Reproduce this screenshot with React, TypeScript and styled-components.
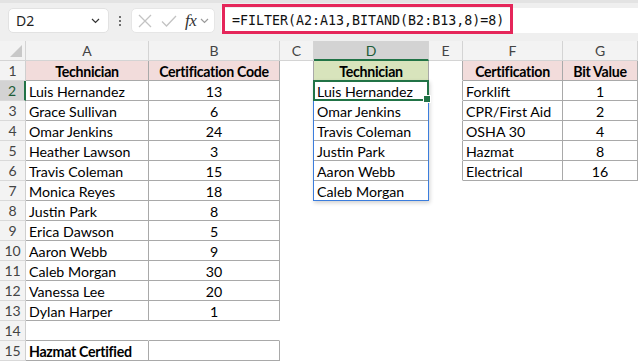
import React from 'react'
import styled, { createGlobalStyle } from 'styled-components'

const GlobalStyle = createGlobalStyle`
  html, body {
    margin: 0;
    padding: 0;
    background: #ffffff;
  }
  body {
    width: 638px;
    height: 362px;
    overflow: hidden;
    font-family: Lato, 'Liberation Sans', sans-serif;
  }
`

const GRID = '#a9a9a9'
const PINK = '#f2dcdb'
const GREEN = '#d8e4bc'
const EXCEL_GREEN = '#217346'

const COLS = [
  { key: 'A', width: 123 },
  { key: 'B', width: 131 },
  { key: 'C', width: 34 },
  { key: 'D', width: 115 },
  { key: 'E', width: 34 },
  { key: 'F', width: 100 },
  { key: 'G', width: 75 },
]
const ROW_HEAD_W = 26
const ROW_H = 20
const ROW_COUNT = 15

interface CellData {
  v: string
  align?: 'left' | 'center'
  bold?: boolean
  fill?: string
}

const technicians: [string, number][] = [
  ['Luis Hernandez', 13],
  ['Grace Sullivan', 6],
  ['Omar Jenkins', 24],
  ['Heather Lawson', 3],
  ['Travis Coleman', 15],
  ['Monica Reyes', 18],
  ['Justin Park', 8],
  ['Erica Dawson', 5],
  ['Aaron Webb', 9],
  ['Caleb Morgan', 30],
  ['Vanessa Lee', 20],
  ['Dylan Harper', 1],
]

const results = ['Luis Hernandez', 'Omar Jenkins', 'Travis Coleman', 'Justin Park', 'Aaron Webb', 'Caleb Morgan']

const certs: [string, number][] = [
  ['Forklift', 1],
  ['CPR/First Aid', 2],
  ['OSHA 30', 4],
  ['Hazmat', 8],
  ['Electrical', 16],
]

// cells keyed like "A1"
const cells: Record<string, CellData> = {
  A1: { v: 'Technician', bold: true, align: 'center', fill: PINK },
  B1: { v: 'Certification Code', bold: true, align: 'center', fill: PINK },
  D1: { v: 'Technician', bold: true, align: 'center', fill: GREEN },
  F1: { v: 'Certification', bold: true, align: 'center', fill: PINK },
  G1: { v: 'Bit Value', bold: true, align: 'center', fill: PINK },
  A15: { v: 'Hazmat Certified', bold: true },
}
technicians.forEach(([name, code], i) => {
  cells['A' + (i + 2)] = { v: name }
  cells['B' + (i + 2)] = { v: String(code), align: 'center' }
})
results.forEach((name, i) => {
  cells['D' + (i + 2)] = { v: name }
})
certs.forEach(([name, bit], i) => {
  cells['F' + (i + 2)] = { v: name }
  cells['G' + (i + 2)] = { v: String(bit), align: 'center' }
})

// bordered ranges: [col from, col to, row from, row to]
const ranges: [number, number, number, number][] = [
  [0, 1, 1, 13],
  [0, 1, 15, 16],
  [3, 3, 1, 7],
  [5, 6, 1, 6],
]
const inRange = (c: number, r: number) =>
  ranges.some(([c0, c1, r0, r1]) => c >= c0 && c <= c1 && r >= r0 && r <= r1)

const colLeft = (c: number) => ROW_HEAD_W + COLS.slice(0, c).reduce((s, col) => s + col.width, 0)

const selected = { col: 3, row: 2 }

const App: React.FC = () => {
  const rows = Array.from({ length: ROW_COUNT }, (_, i) => i + 1)
  const spillLeft = colLeft(3) - 1
  return (
    <>
      <GlobalStyle />
      <Page>
        <FormulaBar>
          <NameBox>
            <span>D2</span>
            <Chevron dark />
          </NameBox>
          <Dots>
            <i />
            <i />
            <i />
          </Dots>
          <FnBox>
            <svg width="14" height="14" viewBox="0 0 14 14">
              <path d="M1 1 L13 13 M13 1 L1 13" stroke="#c3c3c3" strokeWidth="1.3" fill="none" />
            </svg>
            <svg width="16" height="14" viewBox="0 0 16 14">
              <path d="M1 7.5 L5.5 12 L15 2" stroke="#c3c3c3" strokeWidth="1.3" fill="none" />
            </svg>
            <FxLabel>fx</FxLabel>
            <Chevron />
          </FnBox>
          <FormulaInput>
            <FormulaText>=FILTER(A2:A13,BITAND(B2:B13,8)=8)</FormulaText>
            <Highlight />
          </FormulaInput>
        </FormulaBar>

        <Sheet>
          <Corner>
            <svg width="12" height="12" viewBox="0 0 12 12">
              <polygon points="12,0 12,12 0,12" fill="#c8c8c8" />
            </svg>
          </Corner>
          {COLS.map((col, c) => (
            <ColHeader key={col.key} $selected={c === selected.col}>
              {col.key}
            </ColHeader>
          ))}

          {rows.map((r) => (
            <React.Fragment key={r}>
              <RowHeader $selected={r === selected.row}>{r}</RowHeader>
              {COLS.map((col, c) => {
                const data = cells[col.key + r]
                const right = inRange(c, r) || inRange(c + 1, r)
                const bottom = inRange(c, r) || inRange(c, r + 1)
                return (
                  <Cell
                    key={col.key}
                    $fill={data?.fill}
                    $align={data?.align ?? 'left'}
                    $bold={data?.bold}
                    $right={right}
                    $bottom={bottom}
                  >
                    {data?.v}
                  </Cell>
                )
              })}
            </React.Fragment>
          ))}

          <SpillRange
            style={{
              left: spillLeft,
              top: ROW_H * 2 - 1,
              width: COLS[3].width + 1,
              height: ROW_H * results.length + 1,
            }}
          />
          <Selection
            style={{
              left: spillLeft,
              top: ROW_H * 2 - 1,
              width: COLS[3].width + 1,
              height: ROW_H + 1,
            }}
          >
            <FillHandle />
          </Selection>
        </Sheet>
      </Page>
    </>
  )
}

const Chevron = ({ dark }: { dark?: boolean }) => (
  <svg width="9" height="6" viewBox="0 0 9 6">
    <path d="M1 1 L4.5 4.5 L8 1" stroke={dark ? '#333' : '#9a9a9a'} strokeWidth="1.2" fill="none" />
  </svg>
)

const Page = styled.div`
  width: 638px;
  display: flex;
  flex-direction: column;
`

const FormulaBar = styled.div`
  height: 41px;
  box-sizing: border-box;
  background: #efefef;
  border-top: 3px solid #e3e3e3;
  display: flex;
  align-items: flex-start;
  padding: 5px 0 0 8px;
`

const NameBox = styled.div`
  width: 101px;
  height: 25px;
  box-sizing: border-box;
  background: #ffffff;
  border: 1px solid #e2e2e2;
  border-radius: 5px;
  display: flex;
  align-items: center;
  justify-content: space-between;
  padding: 0 8px 0 7px;
  font-family: 'Noto Sans', 'Open Sans', sans-serif;
  font-size: 14px;
  color: #1f1f1f;
`

const Dots = styled.div`
  width: 22px;
  height: 25px;
  display: flex;
  flex-direction: column;
  align-items: center;
  justify-content: center;
  gap: 2px;

  i {
    width: 2px;
    height: 2px;
    background: #444;
    border-radius: 1px;
  }
`

const FnBox = styled.div`
  width: 84px;
  height: 25px;
  box-sizing: border-box;
  background: #ffffff;
  border: 1px solid #e6e6e6;
  border-radius: 5px;
  display: flex;
  align-items: center;
  gap: 9px;
  padding: 0 0 0 6px;
`

const FxLabel = styled.span`
  font-family: 'Liberation Serif', serif;
  font-style: italic;
  font-size: 17px;
  color: #333;
  margin: 0 -5px 0 -1px;
  letter-spacing: -0.5px;
`

const FormulaInput = styled.div`
  position: relative;
  flex: 1;
  height: 25px;
  margin-left: 6px;
  background: #ffffff;
  border-radius: 4px 0 0 4px;
  display: flex;
  align-items: center;
  padding-left: 11px;
`

const FormulaText = styled.span`
  font-family: 'DejaVu Sans Mono', 'Liberation Mono', monospace;
  font-size: 13.3px;
  color: #111;
  white-space: nowrap;
`

const Highlight = styled.div`
  position: absolute;
  left: 1px;
  top: -4px;
  width: 291px;
  height: 30px;
  box-sizing: border-box;
  border: 3px solid #e5265a;
  pointer-events: none;
`

const Sheet = styled.div`
  position: relative;
  display: grid;
  grid-template-columns: ${ROW_HEAD_W}px ${COLS.map((c) => c.width + 'px').join(' ')};
  grid-auto-rows: ${ROW_H}px;
  font-family: Lato, 'Liberation Sans', sans-serif;
`

const HeaderBase = styled.div`
  box-sizing: border-box;
  display: flex;
  align-items: center;
  justify-content: center;
  font-size: 14px;
  color: #444;
  background: #f3f3f3;
`

const Corner = styled(HeaderBase)`
  align-items: flex-end;
  justify-content: flex-end;
  padding: 0 3px 3px 0;
  border-right: 1px solid #d4d4d4;
  border-bottom: 1px solid #d4d4d4;
`

const ColHeader = styled(HeaderBase)<{ $selected?: boolean }>`
  background: ${(p) => (p.$selected ? '#d3d3d3' : '#f3f3f3')};
  border-right: 1px solid #d4d4d4;
  border-bottom: ${(p) => (p.$selected ? `2px solid ${EXCEL_GREEN}` : '1px solid #d4d4d4')};
  color: ${(p) => (p.$selected ? '#1d5c38' : '#444')};
`

const RowHeader = styled(HeaderBase)<{ $selected?: boolean }>`
  background: ${(p) => (p.$selected ? '#d3d3d3' : '#f3f3f3')};
  border-bottom: 1px solid #d9d9d9;
  border-right: ${(p) => (p.$selected ? `2px solid ${EXCEL_GREEN}` : '1px solid #cfcfcf')};
  color: ${(p) => (p.$selected ? '#1d5c38' : '#444')};
`

const Cell = styled.div<{
  $fill?: string
  $align: 'left' | 'center'
  $bold?: boolean
  $right?: boolean
  $bottom?: boolean
}>`
  box-sizing: border-box;
  display: flex;
  align-items: center;
  justify-content: ${(p) => (p.$align === 'center' ? 'center' : 'flex-start')};
  padding: 1px 3px 0;
  background: ${(p) => p.$fill ?? '#ffffff'};
  border-right: 1px solid ${(p) => (p.$right ? GRID : 'transparent')};
  border-bottom: 1px solid ${(p) => (p.$bottom ? GRID : 'transparent')};
  font-size: 14.2px;
  font-weight: ${(p) => (p.$bold ? 700 : 400)};
  letter-spacing: ${(p) => (p.$bold ? '-0.3px' : '0')};
  color: #000;
  white-space: nowrap;
  overflow: hidden;
`

const SpillRange = styled.div`
  position: absolute;
  box-sizing: border-box;
  border: 1px solid #3b7ddd;
  box-shadow: 1px 2px 4px rgba(0, 0, 0, 0.18);
  pointer-events: none;
`

const Selection = styled.div`
  position: absolute;
  box-sizing: border-box;
  border: 2px solid ${EXCEL_GREEN};
  pointer-events: none;
`

const FillHandle = styled.div`
  position: absolute;
  right: -4px;
  bottom: -4px;
  width: 6px;
  height: 6px;
  background: ${EXCEL_GREEN};
  border: 1px solid #ffffff;
`

export default App
